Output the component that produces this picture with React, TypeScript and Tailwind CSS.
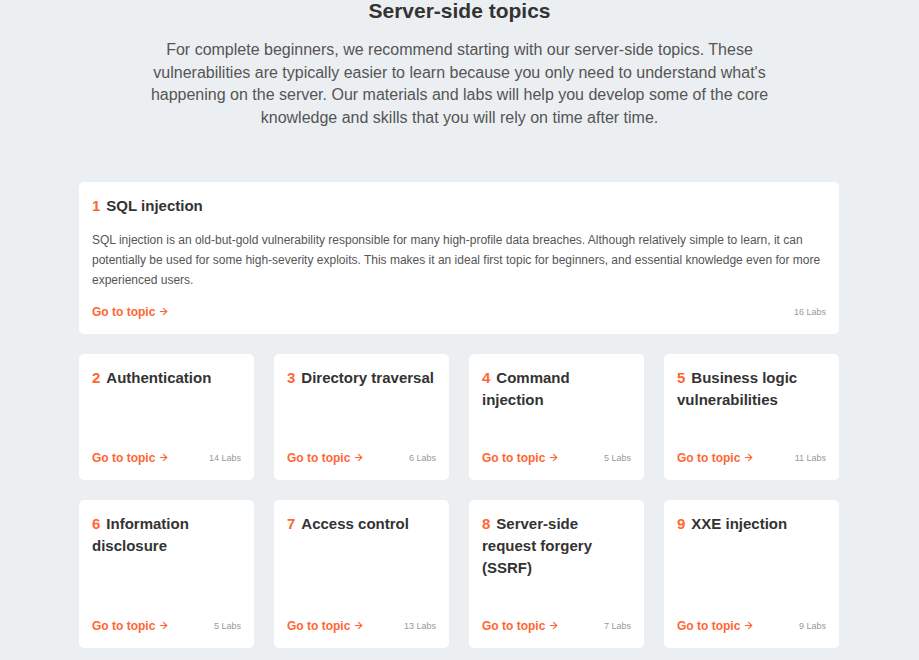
import { ArrowRight } from 'lucide-react';

type Topic = { n: number; title: string; labs: number };

const TOPICS: Topic[] = [
  { n: 2, title: 'Authentication', labs: 14 },
  { n: 3, title: 'Directory traversal', labs: 6 },
  { n: 4, title: 'Command injection', labs: 5 },
  { n: 5, title: 'Business logic vulnerabilities', labs: 11 },
  { n: 6, title: 'Information disclosure', labs: 5 },
  { n: 7, title: 'Access control', labs: 13 },
  { n: 8, title: 'Server-side request forgery (SSRF)', labs: 7 },
  { n: 9, title: 'XXE injection', labs: 9 },
];

function Heading({ n, title }: { n: number; title: string }) {
  return (
    <h3 className="text-[15px] leading-[22px] font-bold text-[#333]">
      <span className="text-[#ff6633] mr-[6px]">{n}</span>
      {title}
    </h3>
  );
}

function Footer({ labs }: { labs: number }) {
  return (
    <div className="flex items-center justify-between leading-[18px]">
      <a className="flex items-center gap-[3px] text-[12px] font-bold text-[#ff6633]">
        Go to topic
        <ArrowRight className="w-[11px] h-[11px]" strokeWidth={2.5} />
      </a>
      <span className="text-[9px] text-[#999]">{labs} Labs</span>
    </div>
  );
}

export default function App() {
  return (
    <div className="min-h-[660px] bg-[#ebeff2] pb-10" style={{ fontFamily: '"Liberation Sans", Arial, sans-serif' }}>
      <h2 className="text-center text-[21px] font-bold text-[#333] leading-[22px]">Server-side topics</h2>
      <p className="mx-auto mt-[17px] max-w-[630px] text-center text-[16px] leading-[22.7px] text-[#555]">
        For complete beginners, we recommend starting with our server-side topics. These vulnerabilities are
        typically easier to learn because you only need to understand what's happening on the server. Our materials
        and labs will help you develop some of the core knowledge and skills that you will rely on time after time.
      </p>

      <div className="ml-[79px] mt-[52px] w-[760px]">
        <div className="rounded-[5px] bg-white px-[13px] pt-[13px] pb-[13px]">
          <Heading n={1} title="SQL injection" />
          <p className="mt-[13px] mb-[13px] text-[12px] leading-[20px] text-[#555]">
            SQL injection is an old-but-gold vulnerability responsible for many high-profile data breaches. Although
            relatively simple to learn, it can potentially be used for some high-severity exploits. This makes it an
            ideal first topic for beginners, and essential knowledge even for more experienced users.
          </p>
          <Footer labs={16} />
        </div>

        <div className="mt-[20px] grid grid-cols-4 gap-x-[20px] gap-y-[20px]">
          {TOPICS.map((t) => (
            <div key={t.n} className="flex flex-col rounded-[5px] bg-white px-[13px] pt-[13px] pb-[13px]">
              <div className="mb-[38px]">
                <Heading n={t.n} title={t.title} />
              </div>
              <div className="mt-auto">
                <Footer labs={t.labs} />
              </div>
            </div>
          ))}
        </div>
      </div>
    </div>
  );
}
